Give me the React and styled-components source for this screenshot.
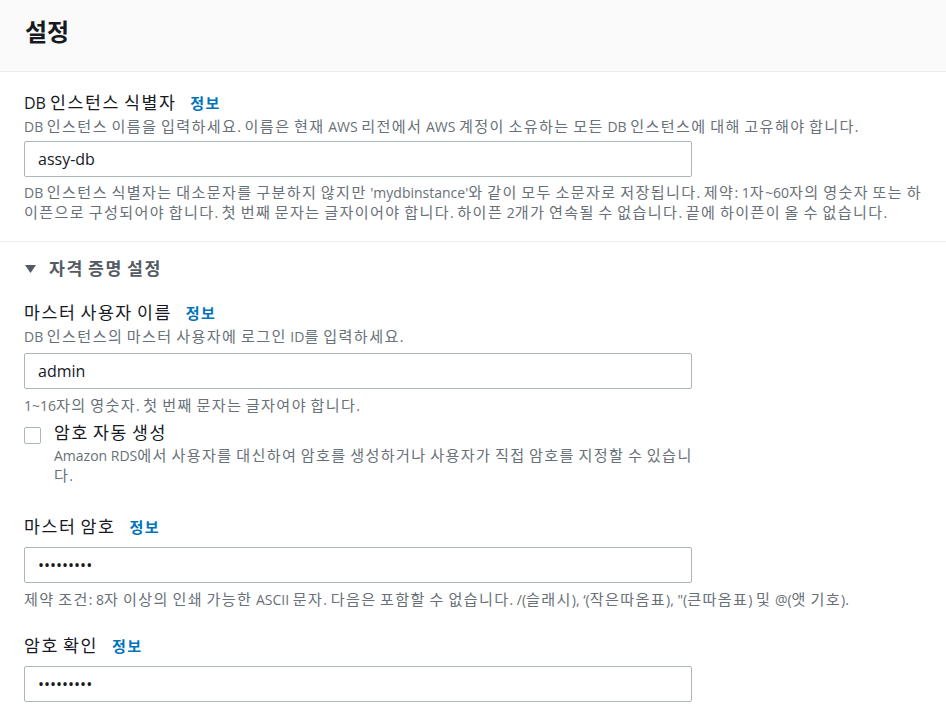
import React from "react";
import styled, { createGlobalStyle } from "styled-components";

const GlobalStyle = createGlobalStyle`
  html, body { margin: 0; padding: 0; background: #ffffff; }
  body {
    font-family: "Open Sans", "Noto Sans CJK KR", sans-serif;
    color: #16191f;
    -webkit-font-smoothing: antialiased;
  }
  * { box-sizing: border-box; }
`;

const Hangul = styled.span`
  font-family: "Noto Sans CJK KR", sans-serif;
  font-size: 1.08em;
  letter-spacing: 0.09em;
  line-height: 0;
`;

const HANGUL_RUN = /([\u1100-\u11FF\u3130-\u318F\uAC00-\uD7AF]+)/;

function ko(text) {
  return text
    .split(HANGUL_RUN)
    .map((part, i) => (i % 2 === 1 ? <Hangul key={i}>{part}</Hangul> : part));
}

const Page = styled.div`
  width: 946px;
  background: #ffffff;
`;

const Header = styled.header`
  height: 72px;
  padding: 17px 25px 0;
  background: #fafafa;
  border-bottom: 1px solid #eaeded;
`;

const Title = styled.h2`
  margin: 0;
  font-size: 24px;
  line-height: 30px;
  font-weight: 700;
  color: #16191f;
`;

const Section = styled.section`
  padding: ${(p) => p.$pad || "20px 24px 18px"};
  border-bottom: ${(p) => (p.$last ? "none" : "1px solid #eaeded")};
`;

const Field = styled.div`
  width: 668px;
  margin-top: ${(p) => p.$mt || 0}px;
`;

const LabelRow = styled.div`
  display: flex;
  align-items: baseline;
  gap: 14px;
  height: 22px;
  font-size: 16px;
  line-height: 22px;
  color: #16191f;
  white-space: nowrap;
`;

const InfoLink = styled.a`
  font-size: 14px;
  font-weight: 700;
  color: #0073bb;
  text-decoration: none;
  cursor: pointer;
`;

const Desc = styled.div`
  padding-top: 3px;
  font-size: 14px;
  line-height: 20px;
  color: #687078;
  white-space: nowrap;
`;

const Hint = styled.div`
  margin-top: ${(p) => p.$mt ?? 6}px;
  font-size: 14px;
  line-height: 20px;
  color: #687078;
  white-space: ${(p) => (p.$wrap ? "normal" : "nowrap")};
`;

const Input = styled.input`
  display: block;
  width: 668px;
  height: 36px;
  margin-top: ${(p) => p.$mt ?? 6}px;
  padding: 0 13px;
  border: 1px solid #aab7b8;
  border-radius: 2px;
  background: #ffffff;
  font-family: "Open Sans", "Noto Sans CJK KR", sans-serif;
  font-size: 16px;
  color: #16191f;
  outline: none;
`;

const Expander = styled.div`
  display: flex;
  align-items: center;
  gap: 13px;
  height: 22px;
  padding-left: 1px;
  font-size: 16px;
  line-height: 22px;
  font-weight: 700;
  color: #545b64;
`;

const CheckRow = styled.div`
  display: flex;
  align-items: flex-start;
  gap: 13px;
  width: 676px;
  margin-top: 6px;
`;

const CheckBox = styled.span`
  flex: none;
  width: 17px;
  height: 17px;
  margin-top: 5px;
  border: 1px solid #aab7b8;
  border-radius: 2px;
  background: #ffffff;
`;

const CheckText = styled.div`
  flex: 1;
  min-width: 0;
`;

const CheckLabel = styled.div`
  font-size: 16px;
  line-height: 22px;
  color: #16191f;
`;

const Triangle = () => (
  <svg width="11" height="8" viewBox="0 0 11 8">
    <polygon points="0,0 11,0 5.5,8" fill="#545b64" />
  </svg>
);

export default function App() {
  return (
    <Page>
      <GlobalStyle />
      <Header>
        <Title>설정</Title>
      </Header>

      <Section>
        <Field>
          <LabelRow>
            <span>{ko("DB 인스턴스 식별자")}</span>
            <InfoLink>{ko("정보")}</InfoLink>
          </LabelRow>
          <Desc>
            {ko("DB 인스턴스 이름을 입력하세요. 이름은 현재 AWS 리전에서 AWS 계정이 소유하는 모든 DB 인스턴스에 대해 고유해야 합니다.")}
          </Desc>
          <Input readOnly value="assy-db" $mt={4} />
          <Hint $mt={6}>
            {ko("DB 인스턴스 식별자는 대소문자를 구분하지 않지만 'mydbinstance'와 같이 모두 소문자로 저장됩니다. 제약: 1자~60자의 영숫자 또는 하")}
            <br />
            {ko("이픈으로 구성되어야 합니다. 첫 번째 문자는 글자이어야 합니다. 하이픈 2개가 연속될 수 없습니다. 끝에 하이픈이 올 수 없습니다.")}
          </Hint>
        </Field>
      </Section>

      <Section $pad="16px 24px 20px" $last>
        <Expander>
          <Triangle />
          <span>{ko("자격 증명 설정")}</span>
        </Expander>

        <Field $mt={22}>
          <LabelRow>
            <span>{ko("마스터 사용자 이름")}</span>
            <InfoLink>{ko("정보")}</InfoLink>
          </LabelRow>
          <Desc>{ko("DB 인스턴스의 마스터 사용자에 로그인 ID를 입력하세요.")}</Desc>
          <Input readOnly value="admin" $mt={6} />
          <Hint $mt={7}>{ko("1~16자의 영숫자. 첫 번째 문자는 글자여야 합니다.")}</Hint>
        </Field>

        <CheckRow>
          <CheckBox />
          <CheckText>
            <CheckLabel>{ko("암호 자동 생성")}</CheckLabel>
            <Hint $mt={2} $wrap>
              {ko("Amazon RDS에서 사용자를 대신하여 암호를 생성하거나 사용자가 직접 암호를 지정할 수 있습니다.")}
            </Hint>
          </CheckText>
        </CheckRow>

        <Field $mt={30}>
          <LabelRow>
            <span>{ko("마스터 암호")}</span>
            <InfoLink>{ko("정보")}</InfoLink>
          </LabelRow>
          <Input type="password" readOnly value="123456789" $mt={9} />
          <Hint $mt={7}>
            {ko("제약 조건: 8자 이상의 인쇄 가능한 ASCII 문자. 다음은 포함할 수 없습니다. /(슬래시), ‘(작은따옴표), \"(큰따옴표) 및 @(앳 기호).")}
          </Hint>
        </Field>

        <Field $mt={25}>
          <LabelRow>
            <span>{ko("암호 확인")}</span>
            <InfoLink>{ko("정보")}</InfoLink>
          </LabelRow>
          <Input type="password" readOnly value="123456789" $mt={9} />
        </Field>
      </Section>
    </Page>
  );
}
